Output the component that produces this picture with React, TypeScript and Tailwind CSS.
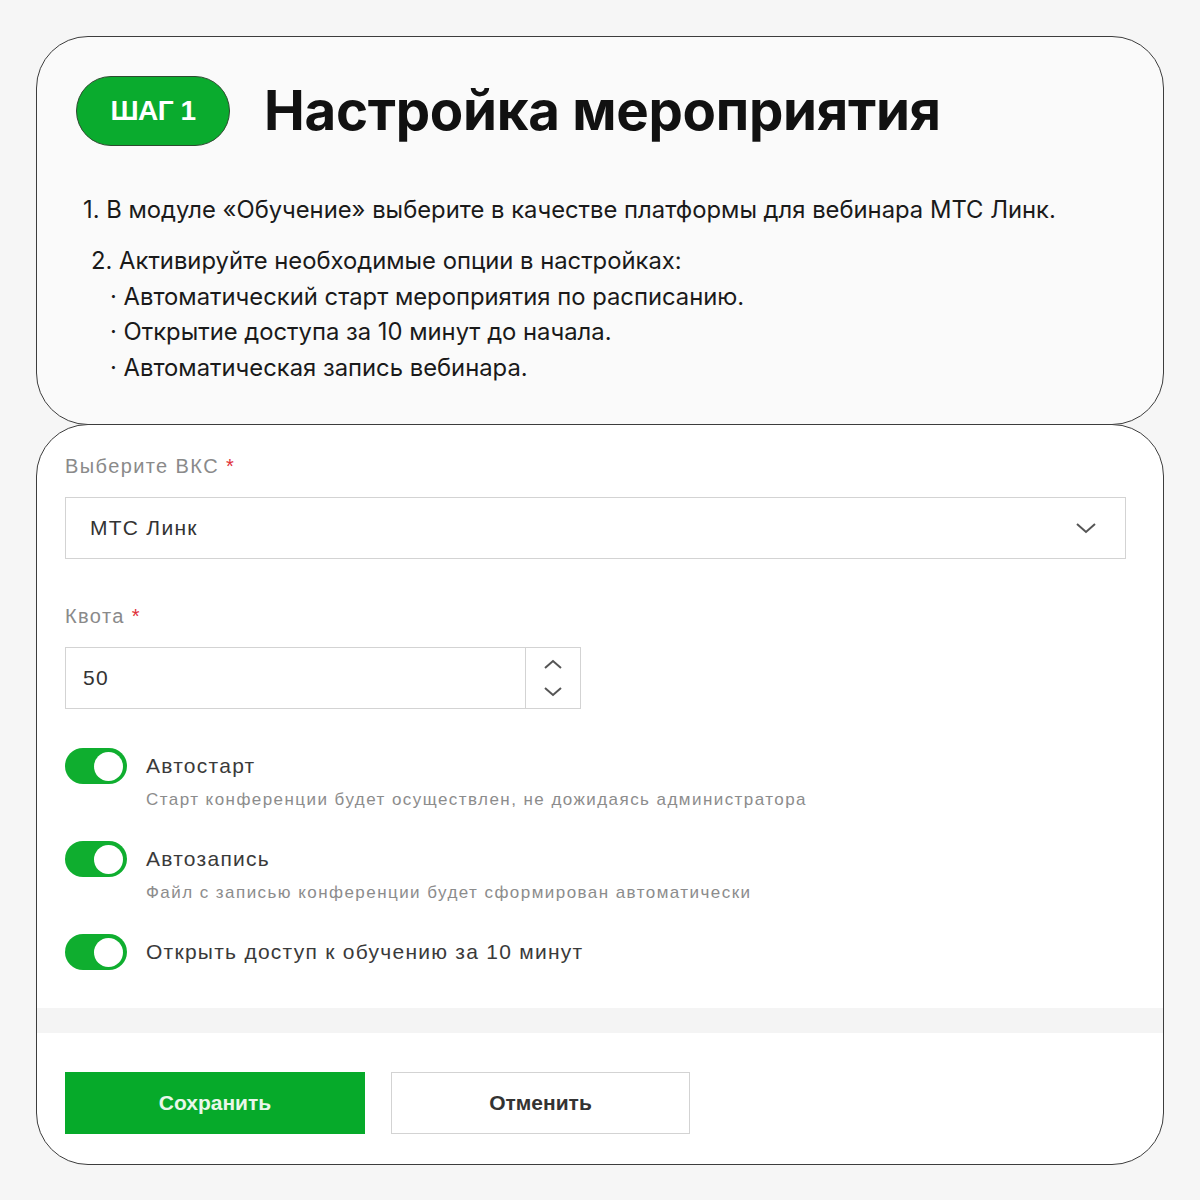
import React from 'react'

const sans = { fontFamily: 'Inter, "Noto Sans", sans-serif' }

function Toggle() {
    return (
        <div className="w-[62px] h-[36px] rounded-full bg-[#0fae2f] flex items-center justify-end px-[4px] shrink-0">
            <div className="w-[29px] h-[29px] rounded-full bg-white" />
        </div>
    )
}

function Option({ title, hint }: { title: string; hint?: string }) {
    return (
        <div className="flex gap-[19px]">
            <Toggle />
            <div className="flex flex-col">
                <div className="h-[36px] flex items-center text-[21px] text-[#3a3a3a] tracking-[0.06em]">{title}</div>
                {hint && <div className="text-[17px] leading-[22px] text-[#8c8c8c] mt-[5px] tracking-[0.085em]">{hint}</div>}
            </div>
        </div>
    )
}

export default function App() {
    return (
        <div className="w-[1200px] h-[1200px] bg-[#f6f6f6] pt-[36px] px-[36px]" style={sans}>
            {/* step card */}
            <div className="h-[389px] rounded-[52px] border-[1.5px] border-[#3d3d3d] bg-[#fafafa] pt-[39px] pl-[39px]">
                <div className="flex items-center gap-[34px]">
                    <div className="w-[154px] h-[70px] rounded-full bg-[#0aab2e] border-[1.5px] border-[#2d4a2f] flex items-center justify-center text-white text-[28px] font-bold tracking-[-0.5px]" style={{ fontFamily: '"Liberation Sans", Arial, sans-serif' }}>
                        ШАГ 1
                    </div>
                    <h1 className="text-[54.6px] font-bold text-[#111] tracking-[-0.3px] leading-none pb-[2px]">Настройка мероприятия</h1>
                </div>
                <div className="text-[23.8px] text-[#1a1a1a] mt-[49px] pl-[7px]">
                    <div className="leading-[30px]">1. В модуле «Обучение» выберите в качестве платформы для вебинара МТС Линк.</div>
                    <div className="leading-[35.5px] mt-[18px] pl-[8px]">2. Активируйте необходимые опции в настройках:</div>
                    <div className="leading-[35.5px] pl-[27px]">· Автоматический старт мероприятия по расписанию.</div>
                    <div className="leading-[35.5px] pl-[27px]">· Открытие доступа за 10 минут до начала.</div>
                    <div className="leading-[35.5px] pl-[27px]">· Автоматическая запись вебинара.</div>
                </div>
            </div>

            {/* form card */}
            <div className="h-[741px] mt-[-1px] rounded-[52px] border-[1.5px] border-[#3d3d3d] bg-white overflow-hidden flex flex-col" style={{ fontFamily: '"Liberation Sans", Arial, sans-serif' }}>
                <div className="pl-[28px] pr-[37px] pt-[26px]">
                    <div className="text-[20px] text-[#8a8a8a] tracking-[0.07em]">
                        Выберите ВКС <span className="text-[#e0303a]">*</span>
                    </div>
                    <div className="mt-[16px] h-[62px] border-[1.5px] border-[#d3d3d3] flex items-center justify-between pl-[24px] pr-[28px]">
                        <span className="text-[21px] text-[#333] tracking-[0.06em]">МТС Линк</span>
                        <svg width="22" height="14" viewBox="0 0 22 14" fill="none" stroke="#555" strokeWidth="2">
                            <path d="M2 3l9 8 9-8" />
                        </svg>
                    </div>

                    <div className="text-[20px] text-[#8a8a8a] mt-[42px] tracking-[0.07em]">
                        Квота <span className="text-[#e0303a]">*</span>
                    </div>
                    <div className="mt-[16px] w-[516px] h-[62px] border-[1.5px] border-[#d3d3d3] flex">
                        <div className="flex-1 flex items-center pl-[17px] text-[21px] text-[#333] tracking-[0.06em]">50</div>
                        <div className="w-[55px] border-l-[1.5px] border-[#d3d3d3] flex flex-col items-center justify-center gap-[16px]">
                            <svg width="20" height="12" viewBox="0 0 20 12" fill="none" stroke="#555" strokeWidth="2">
                                <path d="M2 10l8-7 8 7" />
                            </svg>
                            <svg width="20" height="12" viewBox="0 0 20 12" fill="none" stroke="#555" strokeWidth="2">
                                <path d="M2 2l8 7 8-7" />
                            </svg>
                        </div>
                    </div>

                    <div className="mt-[39px] flex flex-col gap-[30px]">
                        <Option title="Автостарт" hint="Старт конференции будет осуществлен, не дожидаясь администратора" />
                        <Option title="Автозапись" hint="Файл с записью конференции будет сформирован автоматически" />
                        <Option title="Открыть доступ к обучению за 10 минут" />
                    </div>
                </div>

                <div className="mt-[38px] h-[25px] bg-[#f4f4f4]" />

                <div className="px-[28px] pt-[39px] flex gap-[26px]">
                    <button className="w-[300px] h-[62px] bg-[#06aa2a] text-[#e9f7ea] text-[21px] font-bold">Сохранить</button>
                    <button className="w-[299px] h-[62px] bg-white border-[1.5px] border-[#d3d3d3] text-[#333] text-[21px] font-bold">Отменить</button>
                </div>
            </div>
        </div>
    )
}
